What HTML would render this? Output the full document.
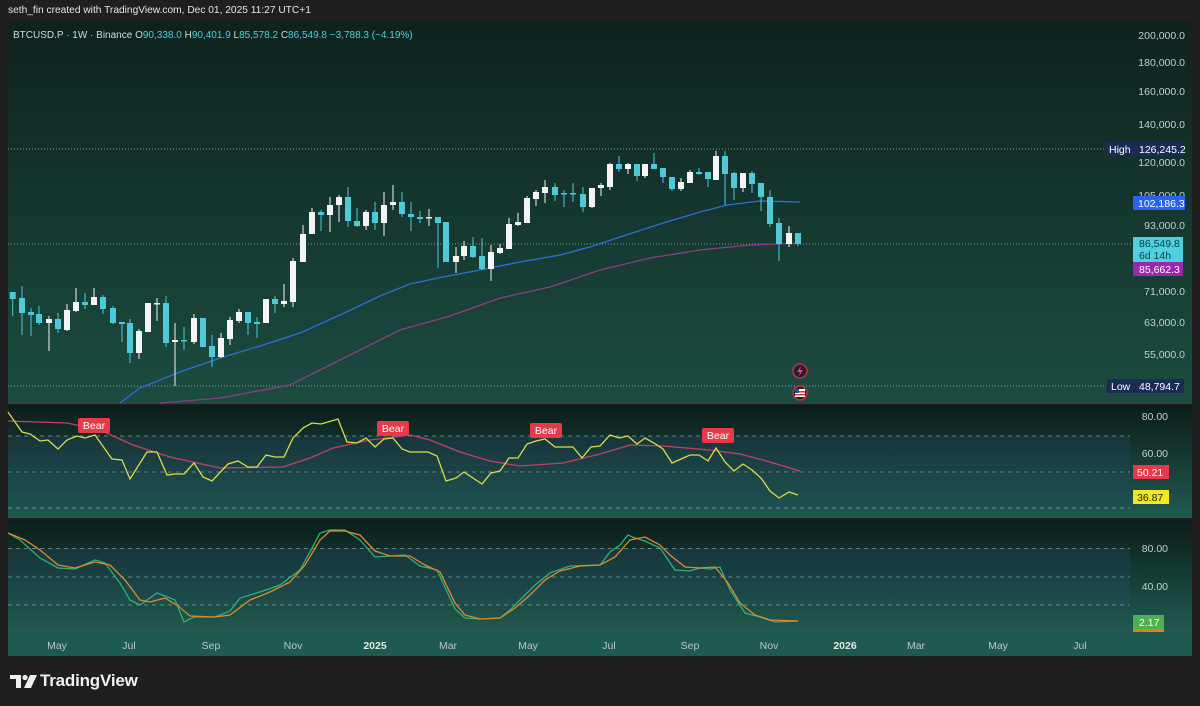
<!DOCTYPE html>
<html><head><meta charset="utf-8"><style>
body{margin:0;width:1200px;height:706px;background:#1f1f1f;overflow:hidden;font-family:"Liberation Sans",sans-serif}
#hdr{position:absolute;left:8px;top:5px;color:#e6e6e6;font-size:10.2px}
svg{position:absolute;left:0;top:0}
#logo{position:absolute;left:40px;top:671px;color:#f0f0f0;font-size:17px;font-weight:bold;letter-spacing:-0.2px}
</style></head><body>
<div id="hdr">seth_fin created with TradingView.com, Dec 01, 2025 11:27 UTC+1</div>
<svg id="s" width="1200" height="706" xmlns="http://www.w3.org/2000/svg" font-family="Liberation Sans, sans-serif">
<defs>
<linearGradient id="gp" x1="0" y1="0" x2="0" y2="1"><stop offset="0" stop-color="#0e221e"/><stop offset="1" stop-color="#1c4c41"/></linearGradient>
<linearGradient id="gr" x1="0" y1="0" x2="0" y2="1"><stop offset="0" stop-color="#0c1d1a"/><stop offset="1" stop-color="#215a50"/></linearGradient>
<linearGradient id="gb" x1="0" y1="0" x2="0" y2="1"><stop offset="0" stop-color="#1a3a44" stop-opacity=".7"/><stop offset="1" stop-color="#1f5058" stop-opacity=".5"/></linearGradient>
</defs>
<rect x="8" y="22" width="1184" height="382" fill="url(#gp)"/>
<rect x="8" y="405" width="1184" height="113" fill="url(#gr)"/>
<rect x="8" y="520" width="1184" height="112" fill="url(#gr)"/>
<rect x="8" y="436" width="1122" height="72" fill="url(#gb)"/>
<rect x="8" y="548" width="1122" height="57" fill="url(#gb)"/>
<rect x="8" y="632" width="1184" height="24" fill="#1e5a4d"/>
<g stroke="#7fa6a6" stroke-dasharray="4,4" stroke-width="1" opacity=".7">
<line x1="8" y1="436" x2="1130" y2="436"/><line x1="8" y1="472" x2="1130" y2="472"/><line x1="8" y1="508" x2="1130" y2="508"/>
<line x1="8" y1="548.5" x2="1130" y2="548.5"/><line x1="8" y1="577" x2="1130" y2="577"/><line x1="8" y1="605" x2="1130" y2="605"/>
</g>
<g stroke="#9fb8b4" stroke-dasharray="1,2" stroke-width="1" opacity=".8">
<line x1="8" y1="149" x2="1105" y2="149"/><line x1="8" y1="244" x2="1135" y2="244"/><line x1="8" y1="386" x2="1105" y2="386"/>
</g>
<text x="13" y="38" font-size="10" fill="#cfdcd8">BTCUSD.P · 1W · Binance <tspan fill="#cfdcd8">O</tspan><tspan fill="#4fd0e0">90,338.0</tspan> <tspan>H</tspan><tspan fill="#4fd0e0">90,401.9</tspan> <tspan>L</tspan><tspan fill="#4fd0e0">85,578.2</tspan> <tspan>C</tspan><tspan fill="#4fd0e0">86,549.8</tspan> <tspan fill="#4fd0e0">−3,788.3 (−4.19%)</tspan></text>
<g id="ma" fill="none" stroke-width="1.3">
<polyline stroke="#2f6fd6" points="120,403 140,388 180,372 220,358 260,346 300,333 340,315 380,296 410,284 438,278 480,270 520,262 560,255 590,247 620,237 660,224 700,212 727,205 760,201 800,202"/>
<polyline stroke="#8a3f86" points="160,403 220,398 290,385 340,360 400,330 450,316 500,298 550,287 600,270 650,258 700,250 750,245 780,244 800,243"/>
</g>
<g id="c"></g>
<g id="ind" fill="none" stroke-width="1.3"></g>
<g font-size="10.5" fill="#c4d0cc" text-anchor="end">
<text x="1185" y="39">200,000.0</text><text x="1185" y="66">180,000.0</text><text x="1185" y="95">160,000.0</text><text x="1185" y="128">140,000.0</text><text x="1185" y="166">120,000.0</text><text x="1185" y="199">105,000.0</text><text x="1185" y="229">93,000.0</text><text x="1185" y="295">71,000.0</text><text x="1185" y="326">63,000.0</text><text x="1185" y="358">55,000.0</text>
<text x="1168" y="420">80.00</text><text x="1168" y="457">60.00</text><text x="1168" y="552">80.00</text><text x="1168" y="590">40.00</text>
</g>
<g font-size="10.5">
<rect x="1105" y="142" width="28" height="14" fill="#1b2b55"/><text x="1109" y="153" fill="#fff">High</text>
<rect x="1133" y="142" width="51" height="14" fill="#1b2b55"/><text x="1139" y="153" fill="#fff">126,245.2</text>
<rect x="1133" y="196" width="52" height="14" rx="1" fill="#2a62f0"/><text x="1138" y="207" fill="#fff">102,186.3</text>
<rect x="1133" y="237" width="50" height="25" fill="#4fd0e0"/><text x="1139" y="247" fill="#0d3a40">86,549.8</text><text x="1139" y="259" fill="#0d3a40">6d 14h</text>
<rect x="1133" y="262" width="50" height="14" fill="#9b27b0"/><text x="1139" y="273" fill="#fff">85,662.3</text>
<rect x="1107" y="379" width="26" height="14" fill="#1b2b55"/><text x="1111" y="390" fill="#fff">Low</text>
<rect x="1133" y="379" width="51" height="14" fill="#1b2b55"/><text x="1139" y="390" fill="#fff">48,794.7</text>
<rect x="1133" y="465" width="36" height="14" fill="#e8394a"/><text x="1137" y="476" fill="#fff">50.21</text>
<rect x="1133" y="490" width="36" height="14" fill="#f4e620"/><text x="1137" y="501" fill="#222">36.87</text>
<rect x="1133" y="628" width="31" height="4" fill="#e87b1c"/>
<rect x="1133" y="615" width="31" height="14" fill="#4caf50"/><text x="1139" y="626" fill="#fff">2.17</text>
</g>
<g font-size="10.5" fill="#b9c9c5" text-anchor="middle">
<text x="57" y="649">May</text><text x="129" y="649">Jul</text><text x="211" y="649">Sep</text><text x="293" y="649">Nov</text><text x="375" y="649" font-weight="bold" fill="#e0e8e6">2025</text><text x="448" y="649">Mar</text><text x="528" y="649">May</text><text x="609" y="649">Jul</text><text x="690" y="649">Sep</text><text x="769" y="649">Nov</text><text x="845" y="649" font-weight="bold" fill="#e0e8e6">2026</text><text x="916" y="649">Mar</text><text x="998" y="649">May</text><text x="1080" y="649">Jul</text>
</g>
<g>
<circle cx="800" cy="371" r="7" fill="#222" stroke="#c0304a" stroke-width="1.5"/><path d="M801 366 L797 372 L800 372 L799 376 L803 370 L800 370Z" fill="#e040a0"/>
<circle cx="800" cy="393" r="7" fill="#222" stroke="#c0304a" stroke-width="1.5"/><rect x="795" y="389" width="10" height="8" fill="#fff"/><rect x="795" y="391" width="10" height="1.5" fill="#d33"/><rect x="795" y="394" width="10" height="1.5" fill="#d33"/><rect x="795" y="389" width="4" height="4" fill="#2a4ea0"/>
</g>
<g fill="#f0f0f0"><path d="M10 675 H21 V688 H16 V679 H10Z"/><circle cx="25" cy="677.5" r="2.6"/><path d="M30 675 H37 L31 688 H24Z"/></g>
</svg>
<div id="logo">TradingView</div>
<script>
var C=[[12.7,292,299,292,316,0],[22,298,313,286,335,0],[31,312,315,308,336,0],[39,314,323,306,325,0],[49,319,323,316,351,1],[58,319,329,313,333,0],[67,310,330,304,331,1],[76,302,311,288,312,1],[85,302,305,293,309,0],[94,297,305,288,305,1],[103,297,309,295,314,0],[113,308,323,306,324,0],[122,322,324,322,342,0],[130,323,353,319,363,0],[139,331,353,329,359,1],[148,303,332,303,332,1],[157,303,304,298,321,1],[166,303,343,296,347,0],[175,340,342,323,386,1],[184,340,341,327,350,0],[194,318,342,314,344,1],[203,318,347,318,347,0],[212,346,357,335,367,0],[221,338,357,333,358,1],[230,320,339,317,345,1],[239,312,321,309,323,1],[248,312,323,312,335,0],[257,322,324,317,338,0],[266,299,323,299,323,1],[275,299,304,296,313,0],[284,301,304,284,307,1],[293,261,302,258,307,1],[303,234,262,225,262,1],[312,212,234,208,234,1],[321,212,215,210,231,0],[330,205,215,197,232,1],[339,197,205,195,222,1],[348,197,221,187,227,0],[357,221,226,208,227,0],[366,212,226,210,230,1],[375,212,223,202,230,0],[384,205,223,192,236,1],[393,202,205,185,210,1],[402,202,214,192,217,0],[411,214,217,202,231,0],[420,217,219,211,223,0],[429,217,218,209,226,1],[438,217,223,217,268,0],[446,222,262,222,262,0],[456,256,262,247,273,1],[464,246,256,241,260,1],[473,246,257,237,258,0],[482,256,269,238,270,0],[491,252,269,245,281,1],[500,248,253,244,254,1],[509,224,249,218,249,1],[518,222,225,213,226,1],[527,198,223,196,223,1],[536,192,199,190,206,1],[545,187,193,180,203,1],[555,187,195,183,201,0],[564,193,194,190,207,0],[573,193,194,183,202,0],[583,194,207,187,212,0],[592,188,207,188,208,1],[601,185,188,183,196,1],[610,164,187,163,190,1],[619,164,169,156,172,0],[628,164,169,163,174,1],[637,164,176,164,181,0],[645,164,176,164,178,1],[654,164,169,153,169,0],[663,168,177,168,183,0],[672,177,189,177,191,0],[681,182,189,178,191,1],[690,172,183,170,183,1],[699,172,174,168,175,0],[708,172,179,172,187,0],[716,156,180,151,180,1],[725,156,174,151,205,0],[734,173,188,172,200,0],[743,173,188,173,192,1],[752,173,184,171,193,0],[761,183,197,183,211,0],[770,197,224,190,227,0],[779,223,244,218,261,0],[789,233,244,226,247,1],[798,233,244,233,246,0]];
var h='';C.forEach(function(c){var f=c[5]?'#f4f4f4':'#4fc8d8';h+='<line x1="'+c[0]+'" x2="'+c[0]+'" y1="'+c[3]+'" y2="'+c[4]+'" stroke="'+f+'" stroke-width="1"/><rect x="'+(c[0]-3)+'" y="'+c[1]+'" width="6" height="'+Math.max(1.5,c[2]-c[1])+'" fill="'+f+'"/>';});
document.getElementById('c').innerHTML=h;
var Y="8,412 22,432 30,434 40,441 48,440 58,449 67,440 77,436 85,438 95,435 112,459 122,460 130,479 147,452 157,452 167,475 175,474 184,474 194,463 203,477 212,481 228,464 238,461 248,467 257,467 266,455 275,457 284,457 293,438 303,428 312,423 321,424 338,419 347,442 357,443 366,438 375,447 384,439 393,438 402,449 410,452 428,452 437,456 446,481 456,478 464,472 482,484 491,473 500,471 509,458 518,458 527,444 536,441 545,439 555,447 564,447 573,447 582,458 591,447 600,446 610,435 619,438 628,436 637,444 645,438 654,443 663,449 672,463 681,459 690,455 699,455 708,461 716,448 725,462 734,471 743,464 752,470 761,478 770,491 779,498 789,492 798,495";
var R="8,421 67,423 100,430 133,445 170,457 220,468 283,467 310,458 333,448 370,440 410,435 430,440 460,452 490,461 520,466 563,463 600,454 630,445 663,446 710,450 740,454 763,460 780,465 800,471";
var G="8,533 20,540 40,558 58,568 75,569 95,560 105,563 120,583 130,600 140,605 157,593 175,600 184,622 194,617 215,617 230,611 240,598 260,592 280,585 300,570 312,548 320,533 330,530 345,530 360,540 375,557 390,556 405,555 420,566 437,570 455,609 465,618 480,619 500,618 510,610 520,600 535,585 550,573 570,566 600,565 610,552 620,545 628,535 635,538 645,541 660,548 675,570 690,571 700,568 710,569 720,567 730,590 745,613 760,617 775,622 798,621";
var O="8,533 25,540 40,550 58,565 75,568 95,562 110,565 125,580 140,600 150,602 165,598 178,606 190,616 215,617 230,615 250,600 270,592 290,582 305,565 320,540 330,531 345,531 360,535 375,551 390,556 410,556 425,565 440,572 455,603 465,615 480,619 500,618 515,608 530,595 545,580 560,571 580,566 600,565 615,557 630,540 645,537 660,545 670,555 685,567 700,568 715,567 728,583 740,603 755,615 770,620 798,621";
var s='<polyline stroke="#c2406a" points="'+R+'"/><polyline stroke="#d8de4a" points="'+Y+'"/><polyline stroke="#2fb07a" points="'+G+'"/><polyline stroke="#e08a2a" points="'+O+'"/>';
[[94,425],[393,428],[546,430],[718,435]].forEach(function(b){s+='<rect x="'+(b[0]-16)+'" y="'+(b[1]-7)+'" width="32" height="15" rx="2" fill="#e8394a"/><text x="'+b[0]+'" y="'+(b[1]+4)+'" font-size="10.5" fill="#fff" stroke="none" text-anchor="middle">Bear</text>';});
document.getElementById('ind').innerHTML=s;
</script>
</body></html>
